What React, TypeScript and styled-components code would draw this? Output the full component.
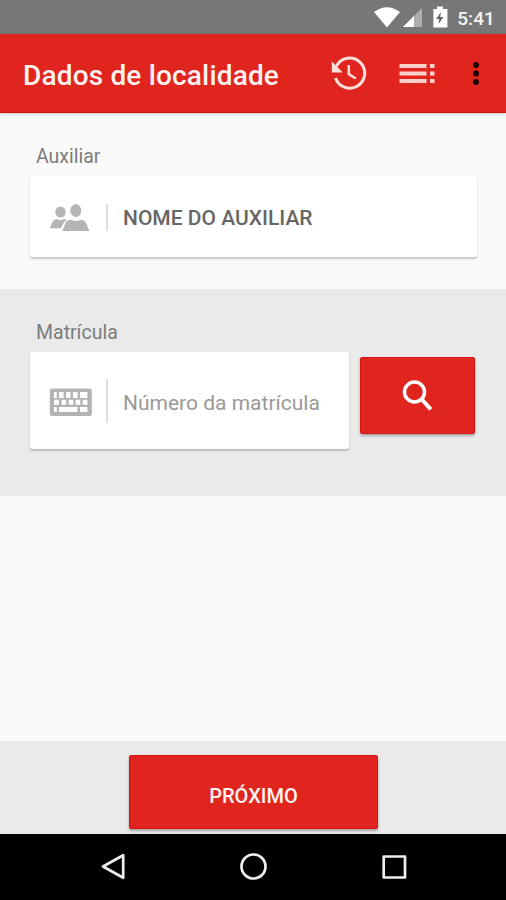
import React from 'react';
import styled, { createGlobalStyle } from 'styled-components';

const red = '#e0241e';

const GlobalStyle = createGlobalStyle`
  *, *::before, *::after { box-sizing: border-box; }
  body { margin: 0; background: #fafafa; font-family: Roboto, sans-serif; }
  button, input { font-family: inherit; border: 0; margin: 0; }
  svg { display: block; flex: none; }
`;

const Screen = styled.main`
  display: flex;
  flex-direction: column;
  width: 506px;
  height: 900px;
  overflow: hidden;
  background: #fafafa;
`;

const StatusBar = styled.div`
  display: flex;
  align-items: center;
  justify-content: flex-end;
  height: 34px;
  padding-right: 11px;
  background: #777777;
`;

const Clock = styled.time`
  margin-left: 9px;
  padding-top: 3px;
  color: #f4f4f4;
  font-size: 19px;
  font-weight: 500;
  line-height: 22px;
  letter-spacing: 0.1px;
`;

const AppBar = styled.header`
  z-index: 1;
  display: flex;
  align-items: center;
  height: 79px;
  padding: 2px 6px 0 23px;
  background: ${red};
  border-bottom: 1px solid #c9140f;
  box-shadow: 0 1px 3px rgba(0, 0, 0, 0.2);
`;

const Title = styled.h1`
  flex: 1;
  margin: 0;
  padding-top: 3px;
  color: #fff3f1;
  font-size: 28px;
  font-weight: 500;
  line-height: 36px;
  letter-spacing: 0.17px;
  white-space: nowrap;
`;

const Actions = styled.div`
  display: flex;
  align-items: center;
`;

const IconButton = styled.button<{ $width: number }>`
  display: flex;
  justify-content: center;
  width: ${({ $width }) => $width}px;
  padding: 0;
  background: none;
`;

const Section = styled.section<{ $shaded?: boolean; $height: number }>`
  height: ${({ $height }) => $height}px;
  padding: 30px 29px 0 30px;
  background: ${({ $shaded }) => ($shaded ? '#eaeaea' : '#fafafa')};
`;

const Label = styled.label`
  display: block;
  height: 33px;
  padding: 1px 0 0 6px;
  color: #7c7c7c;
  font-size: 19.5px;
  line-height: 25px;
`;

const FieldRow = styled.div`
  display: flex;
  gap: 11px;
`;

const Field = styled.div<{ $height: number }>`
  display: flex;
  flex: 1;
  align-items: center;
  min-width: 0;
  height: ${({ $height }) => $height}px;
  padding: 1px 0 0 19px;
  background: #ffffff;
  border-radius: 3px;
  box-shadow: 0 1.5px 2px rgba(0, 0, 0, 0.2);
`;

const Divider = styled.span<{ $height: number }>`
  flex: none;
  width: 2px;
  height: ${({ $height }) => $height}px;
  margin: 0 15px 0 14px;
  background: #dedede;
`;

const Name = styled.span`
  padding-top: 2px;
  color: #666666;
  font-size: 21px;
  font-weight: 500;
  line-height: 26px;
  white-space: nowrap;
`;

const NumberInput = styled.input`
  flex: 1;
  min-width: 0;
  padding: 4px 0 0;
  outline: none;
  background: transparent;
  font-size: 21px;
  line-height: 26px;
  &::placeholder { color: #999999; opacity: 1; }
`;

const RedButton = styled.button<{ $width: number; $height: number }>`
  display: flex;
  flex: none;
  align-items: center;
  justify-content: center;
  width: ${({ $width }) => $width}px;
  height: ${({ $height }) => $height}px;
  padding: 0;
  color: #fff3f1;
  background: ${red};
  border: 1px solid #d61410;
  border-radius: 2px;
  box-shadow: 0 2px 3px rgba(0, 0, 0, 0.3);
`;

const SearchButton = styled(RedButton)`
  margin: 5px 2px 0 0;
`;

const NextButton = styled(RedButton)`
  padding-top: 8px;
  font-size: 20px;
  font-weight: 500;
`;

const Footer = styled.footer`
  display: flex;
  justify-content: center;
  height: 93px;
  margin-top: auto;
  padding: 14px 0 0 1px;
  background: #eaeaea;
`;

const NavBar = styled.nav`
  display: flex;
  align-items: center;
  justify-content: space-between;
  height: 66px;
  padding: 0 98px 0 99px;
  background: #000000;
`;

const StatusIcons = () => (
  <svg width="75" height="34" viewBox="373 0 75 34" fill="#ffffff">
    <path d="M374 12Q387 2.5 400 12L387 27.5Z" />
    <path d="M422 8v19h-19z" opacity=".4" />
    <path d="M414 16v11h-11z" />
    <path d="M437 6.5h6v2.5h4.4v18.5h-14V9h3.6z" />
    <path d="M441 12l-5 7h3.3l-.8 5 5-7h-3.3z" fill="#666" />
  </svg>
);

const HistoryIcon = () => (
  <svg width="38" height="40" viewBox="330 54 38 40">
    <path d="M335.5 78A15 15 0 1 0 336.5 66" fill="none" stroke="#ffe0dc" strokeWidth="3" />
    <path d="M331.8 61.5v11h11z" fill="#ffe0dc" />
    <path d="M348.8 65v9l7 4.5" fill="none" stroke="#ffe0dc" strokeWidth="2.5" />
  </svg>
);

const ListIcon = () => (
  <svg width="36" height="24" viewBox="399 61 36 24" fill="#ffd0ca">
    <path d="M399.5 63h27v4h-27zM399.5 70.5h27v4h-27zM399.5 78h27v4h-27zM430 63h4.5v4H430zM430 70.5h4.5v4H430zM430 78h4.5v4H430z" />
  </svg>
);

const MoreIcon = () => (
  <svg width="8" height="26" viewBox="0 0 8 26" fill="#160000">
    <circle cx="4" cy="4" r="2.9" />
    <circle cx="4" cy="12.5" r="2.9" />
    <circle cx="4" cy="21" r="2.9" />
  </svg>
);

const PeopleIcon = () => (
  <svg width="43" height="32" viewBox="49 201 43 32" fill="#b5b5b5">
    <ellipse cx="60.5" cy="212" rx="5.2" ry="5.6" />
    <path d="M49.8 228.3l3-7.2q.7-1.4 2.4-1.6l1.8-.4q3.6 2.2 7 0l3 .7c-3 1.6-4.4 4.4-6 8.5z" />
    <ellipse cx="75.8" cy="210.5" rx="5.5" ry="6.5" />
    <path d="M62.2 231l3.6-8.6q.8-1.7 2.6-2.1l2.6-.6q4.8 2.8 9.6 0l2.6.6q1.8.4 2.6 2.1l3.7 8.6z" />
  </svg>
);

const KeyboardIcon = () => (
  <svg width="43" height="32" viewBox="49 385 43 32">
    <rect x="49.8" y="388.5" width="42" height="27.5" rx="2" fill="#b3b3b3" />
    <g fill="#ffffff">
      <path d="M54 392h2.8v6H54zM59 392h4.6v6H59zM66 392h4.6v6H66zM73 392h4.6v6H73zM80 392h7.4v6H80z" />
      <path d="M54 399.8h5v5h-5zM61.5 399.8h4.7v5h-4.7zM68.6 399.8h4.7v5h-4.7zM75.6 399.8h4.7v5h-4.7zM82.7 399.8h4.7v5h-4.7z" />
      <path d="M54 407h2.8v5H54zM59 407h18.5v5H59zM80 407h7.4v5H80z" />
    </g>
  </svg>
);

const SearchIcon = () => (
  <svg width="32" height="32" viewBox="402 379 32 32" fill="none" stroke="#ffffff">
    <circle cx="414.5" cy="391" r="10" strokeWidth="3.5" />
    <path d="M421.5 398l9.3 10.3" strokeWidth="4" />
  </svg>
);

const BackIcon = () => (
  <svg width="28" height="30" viewBox="99 852 28 30" fill="none" stroke="#eee" strokeWidth="2.7" strokeLinejoin="round">
    <path d="M123.2 855.2v22.6L103 866.5z" />
  </svg>
);

const HomeIcon = () => (
  <svg width="28" height="30" viewBox="0 0 28 30" fill="none" stroke="#eee" strokeWidth="2.7">
    <circle cx="13.5" cy="14.5" r="12" />
  </svg>
);

const RecentIcon = () => (
  <svg width="28" height="30" viewBox="380 852 28 30" fill="none" stroke="#eee" strokeWidth="2.7" strokeLinejoin="round">
    <rect x="383.7" y="856.5" width="21.3" height="21" />
  </svg>
);

export default function App() {
  return (
    <Screen>
      <GlobalStyle />
      <StatusBar>
        <StatusIcons />
        <Clock>5:41</Clock>
      </StatusBar>
      <AppBar>
        <Title>Dados de localidade</Title>
        <Actions>
          <IconButton $width={68} aria-label="Histórico"><HistoryIcon /></IconButton>
          <IconButton $width={68} aria-label="Lista"><ListIcon /></IconButton>
          <IconButton $width={49} aria-label="Mais opções"><MoreIcon /></IconButton>
        </Actions>
      </AppBar>
      <Section $height={176}>
        <Label>Auxiliar</Label>
        <FieldRow>
          <Field $height={81}>
            <PeopleIcon />
            <Divider $height={27} />
            <Name>NOME DO AUXILIAR</Name>
          </Field>
        </FieldRow>
      </Section>
      <Section $height={207} $shaded>
        <Label htmlFor="matricula">Matrícula</Label>
        <FieldRow>
          <Field $height={97}>
            <KeyboardIcon />
            <Divider $height={44} />
            <NumberInput id="matricula" placeholder="Número da matrícula" />
          </Field>
          <SearchButton $width={115} $height={77} aria-label="Buscar"><SearchIcon /></SearchButton>
        </FieldRow>
      </Section>
      <Footer>
        <NextButton $width={249} $height={74}>PRÓXIMO</NextButton>
      </Footer>
      <NavBar>
        <BackIcon />
        <HomeIcon />
        <RecentIcon />
      </NavBar>
    </Screen>
  );
}
